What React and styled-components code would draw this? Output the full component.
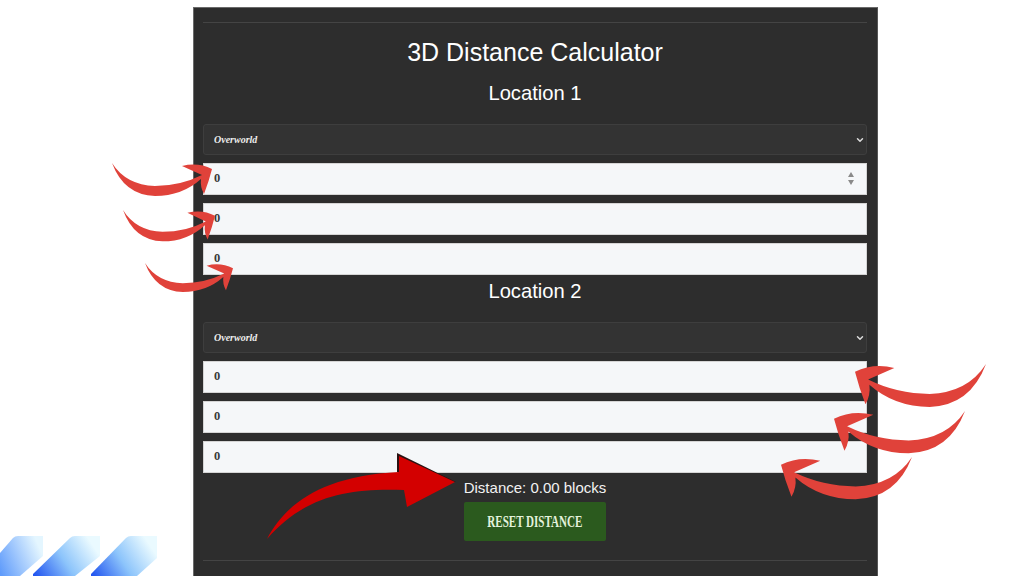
import styled, { createGlobalStyle } from 'styled-components';
import { ChevronDown } from 'lucide-react';

const GlobalStyle = createGlobalStyle`
  html, body {
    margin: 0;
    padding: 0;
    height: 576px;
    overflow: hidden;
    background: #fff;
  }
`;

const Page = styled.div`
  position: relative;
  width: 1024px;
  height: 576px;
  overflow: hidden;
  padding: 7px 0 0 193px;
  box-sizing: border-box;
  font-family: 'Liberation Sans', Arial, sans-serif;
`;

const Panel = styled.main`
  width: 685px;
  height: 600px;
  box-sizing: border-box;
  padding: 14px 10px 0 9px;
  background: #2d2d2d;
  border-top: 1px solid #6a6a6a;
  border-left: 1px solid #6a6a6a;
  border-right: 1px solid #555;
`;

const Rule = styled.hr`
  margin: 0;
  border: 0;
  border-top: 1px solid #444;
`;

const Title = styled.h1`
  margin: 15px 0 0;
  font-size: 25px;
  line-height: 28px;
  font-weight: 400;
  text-align: center;
  color: #fff;
`;

const Heading = styled.h2`
  margin: ${(p) => p.$top}px 0 0;
  font-size: 20.2px;
  line-height: 24px;
  font-weight: 400;
  text-align: center;
  color: #fff;
`;

const Fields = styled.div`
  display: flex;
  flex-direction: column;
  gap: 8px;
  margin-top: 19px;
`;

const FieldWrap = styled.div`
  position: relative;
`;

const Select = styled.select`
  display: block;
  width: 100%;
  height: 31px;
  box-sizing: border-box;
  padding: 0 10px;
  appearance: none;
  background: #333;
  border: 1px solid #3e3e3e;
  border-radius: 3px;
  color: #eee;
  font-family: 'Liberation Serif', serif;
  font-size: 10px;
  font-style: italic;
  font-weight: 700;
`;

const Caret = styled(ChevronDown)`
  position: absolute;
  top: 11px;
  right: 2px;
  color: #ddd;
  pointer-events: none;
`;

const NumberInput = styled.input`
  display: block;
  width: 100%;
  height: 32px;
  box-sizing: border-box;
  padding: 0 10px 2px;
  background: #f5f7f9;
  border: 1px solid #d5d5d5;
  color: #3a3a3a;
  font-family: 'Liberation Serif', serif;
  font-size: 12.5px;
  font-weight: 700;
  outline: none;
`;

const Spinner = styled.div`
  position: absolute;
  top: 9px;
  right: 13px;
  display: flex;
  flex-direction: column;
  gap: 3px;
`;

const SpinArrow = styled.span`
  width: 0;
  height: 0;
  border-left: 3.5px solid transparent;
  border-right: 3.5px solid transparent;
  ${(p) => (p.$down ? 'border-top' : 'border-bottom')}: 5px solid #8a8a8a;
`;

const Result = styled.div`
  display: flex;
  flex-direction: column;
  align-items: center;
  margin-top: 6px;
`;

const Distance = styled.p`
  margin: 0;
  font-size: 15px;
  line-height: 17px;
  color: #f2f2f2;
`;

const ResetButton = styled.button`
  width: 142px;
  height: 39px;
  margin-top: 6px;
  padding: 0;
  border: 0;
  border-radius: 2px;
  background: #2b5a1e;
  color: #e4f2dc;
  font-family: 'Liberation Serif', serif;
  font-size: 16px;
  font-weight: 700;
  text-transform: uppercase;
  white-space: nowrap;
`;

const ButtonLabel = styled.span`
  display: inline-block;
  transform: scaleX(0.69);
`;

const BottomRule = styled(Rule)`
  margin-top: 19px;
`;

const Overlay = styled.svg`
  position: absolute;
  top: 0;
  left: 0;
  width: 1024px;
  height: 576px;
  pointer-events: none;
`;

const SWOOSH =
  'M0 0Q14 22 43 23Q68 23 90 12L70 3Q86 -1 100 6Q97 18 92 31Q88 24 89 16Q70 33 43 33Q12 32 0 0Z';

// x, y = where the tail starts; flipped ones point left
const swooshes = [
  { x: 112, y: 163, sx: 1, sy: 1 },
  { x: 123, y: 210, sx: 0.92, sy: 0.95 },
  { x: 145, y: 263, sx: 0.88, sy: 0.88 },
  { x: 986, y: 364, sx: -1.31, sy: 1.3 },
  { x: 965, y: 411, sx: -1.31, sy: 1.28 },
  { x: 912, y: 457, sx: -1.31, sy: 1.28 },
];

const Field = ({ spinner }) => (
  <FieldWrap>
    <NumberInput type="text" defaultValue="0" />
    {spinner && (
      <Spinner>
        <SpinArrow />
        <SpinArrow $down />
      </Spinner>
    )}
  </FieldWrap>
);

const DimensionSelect = () => (
  <FieldWrap>
    <Select defaultValue="Overworld">
      <option>Overworld</option>
      <option>Nether</option>
      <option>End</option>
    </Select>
    <Caret size={10} strokeWidth={3.5} />
  </FieldWrap>
);

const Location = ({ spinner }) => (
  <Fields>
    <DimensionSelect />
    <Field spinner={spinner} />
    <Field />
    <Field />
  </Fields>
);

export default function App() {
  return (
    <Page>
      <GlobalStyle />
      <Panel>
        <Rule />
        <Title>3D Distance Calculator</Title>
        <Heading $top={15}>Location 1</Heading>
        <Location spinner />
        <Heading $top={4}>Location 2</Heading>
        <Location />
        <Result>
          <Distance>Distance: 0.00 blocks</Distance>
          <ResetButton>
            <ButtonLabel>Reset Distance</ButtonLabel>
          </ResetButton>
        </Result>
        <BottomRule />
      </Panel>

      <Overlay viewBox="0 0 1024 576">
        <defs>
          <linearGradient id="stripe" x1="0" y1="0.9" x2="1" y2="0.5">
            <stop offset="0" stopColor="#2457f0" />
            <stop offset="0.5" stopColor="#8cc4fb" />
            <stop offset="1" stopColor="#eafaff" />
          </linearGradient>
          <linearGradient id="stripeLight" x1="0" y1="0.9" x2="1" y2="0.5">
            <stop offset="0" stopColor="#5f9bfb" />
            <stop offset="1" stopColor="#e4f6ff" />
          </linearGradient>
        </defs>
        <path d="M0 553L13 538Q15 536 18 536H43V556L20 576H0Z" fill="url(#stripeLight)" />
        <path d="M33 574L70 538Q72 536 75 536H100V556L75 576H33Z" fill="url(#stripe)" />
        <path d="M91 574L126 538Q128 536 131 536H157V558L137 576H91Z" fill="url(#stripe)" />

        {swooshes.map((s, i) => (
          <path
            key={i}
            d={SWOOSH}
            fill="#e0423a"
            transform={`translate(${s.x} ${s.y}) scale(${s.sx} ${s.sy})`}
          />
        ))}

        <path d="M397 472L397 453L456 482L440 482Z" fill="#2a1212" />
        <path
          d="M267 539C285 505 320 476 399 472L399 456L455 482L407 507L404 490C350 488 305 495 267 539Z"
          fill="#d30000"
        />
      </Overlay>
    </Page>
  );
}
